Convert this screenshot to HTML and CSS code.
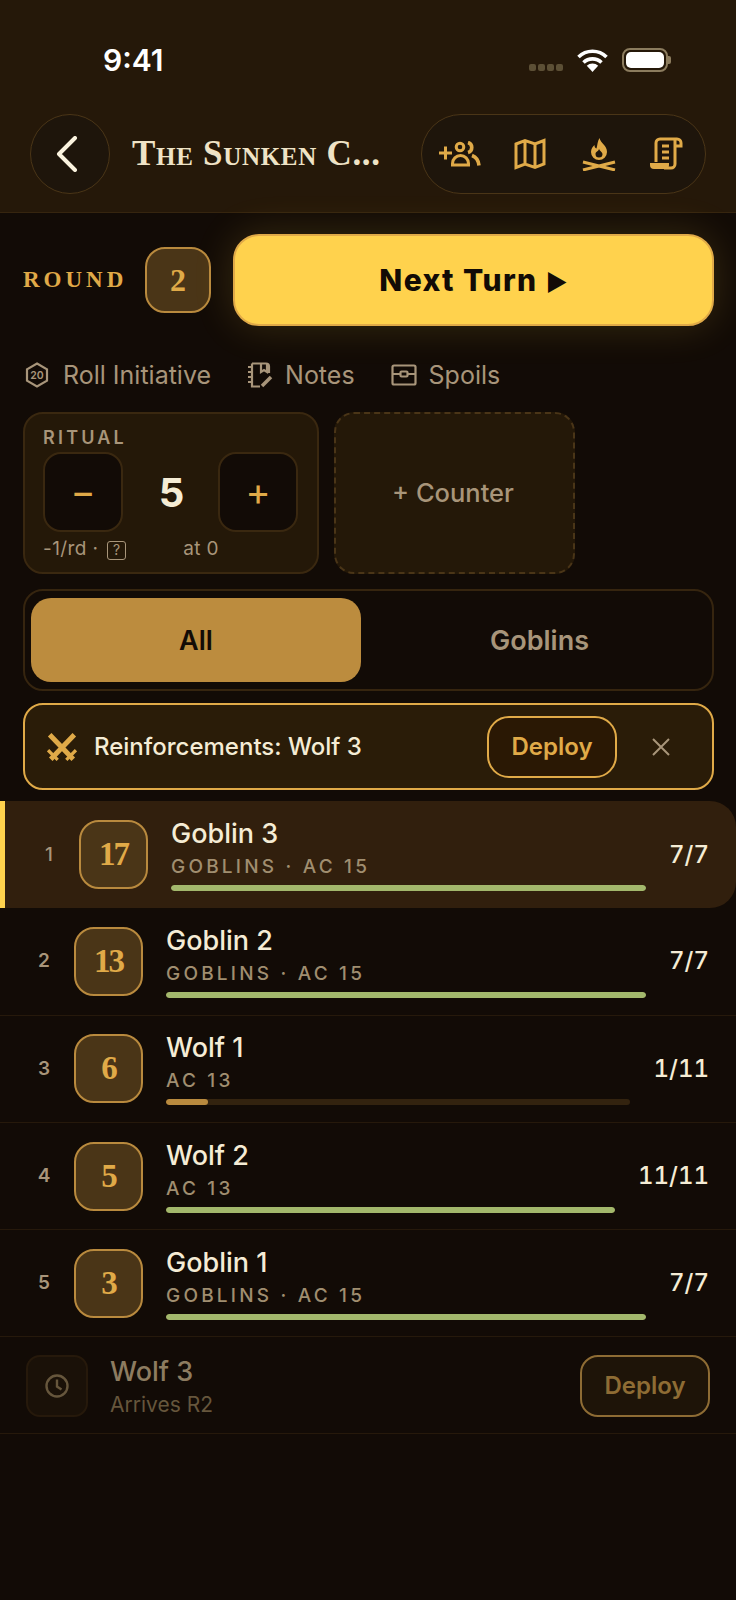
FILE: index.html
```html
<!DOCTYPE html>
<html lang="en">
<head>
  <meta charset="utf-8" />
  <title>The Sunken Crypt</title>
  <link rel="stylesheet" href="styles.css">
</head>
<body>
  <header class="top">
    <div class="status">
      <span class="clock">9:41</span>
      <div class="status-icons">
        <span class="dots"><i></i><i></i><i></i><i></i></span>
        <svg class="wifi" width="33" height="24" viewBox="0 0 32 24"><path d="M2 9a20 20 0 0 1 28 0M7 14.500a13 13 0 0 1 18 0M11.500 19a6.500 6.500 0 0 1 9 0" fill="none" stroke="#fff" stroke-width="3.600"/><path d="M16 24l-4-4.500a6 6 0 0 1 8 0z" fill="#fff"/></svg>
        <span class="battery"><b></b></span>
      </div>
    </div>
    <nav class="nav">
      <a class="back"><svg width="22" height="36" viewBox="0 0 22 36"><path d="M19 2L3 18l16 16" fill="none" stroke="#fbf3df" stroke-width="4" stroke-linecap="round" stroke-linejoin="round"/></svg></a>
      <h1 class="title">The Sunken C...</h1>
      <div class="tools">
        <svg width="42" height="26" viewBox="0 0 42 26" fill="none" stroke="#e0aa48" stroke-width="3"><path d="M0 12h13M6.500 5.500v13"/><circle cx="21" cy="6" r="3.800"/><path d="M13.500 24v-1.500a8 8 0 0 1 16 0V24z"/><path d="M29 1.500a5.200 5.200 0 0 1 0 10M33 14.500c4 1.500 6.500 5 7 10" stroke-width="3.600"/></svg>
        <svg class="map" width="32" height="32" viewBox="0 0 32 32" fill="none" stroke="#e0aa48" stroke-width="3"><path d="M2 6l9-3.500 10 3.500 9-3.500V26l-9 3.500L11 26l-9 3.500zM11 2.500V26M21 6v23.500"/></svg>
        <svg width="34" height="34" viewBox="0 0 34 34"><path fill="#e0aa48" fill-rule="evenodd" d="M17.500 1c1 5 7.500 7.500 7.500 14a8 8 0 0 1-16 0c0-3.500 2-5.500 3.500-7 0 2 .5 3 2 3.500C15.500 8 15.500 4 17.500 1zM17 12c.5 2 3.500 3 3.500 5a3.500 3.500 0 0 1-7 0c0-2.500 3-2.500 3.500-5z"/><path d="M1 25l32 8M33 25L1 33" stroke="#e0aa48" stroke-width="3"/></svg>
        <svg width="34" height="34" viewBox="0 0 34 34" fill="none" stroke="#e0aa48" stroke-width="3"><path d="M7 25V6a4 4 0 0 1 4-4h17a4 4 0 0 1 4 4v3h-6M26 3v24a4 4 0 0 1-4 4H15M13 9h7M13 15h7M13 21h7"/><path d="M1 26h19v2a4 4 0 0 1-4 4H5a4 4 0 0 1-4-4z" fill="#e0aa48" stroke="none"/></svg>
      </div>
    </nav>
  </header>

  <main>
    <section class="controls">
      <div class="round-row">
        <span class="round-label">ROUND</span>
        <span class="round-badge">2</span>
        <a class="next-turn">Next Turn <span class="arrow">▶</span></a>
      </div>

      <div class="actions">
        <a class="action">
          <svg width="26" height="26" viewBox="0 0 26 26"><path d="M12 1.500l10 5.800v11.400l-10 5.800-10-5.800V7.300z" fill="none" stroke="#a8957a" stroke-width="2.200"/><text x="12" y="17" text-anchor="middle" class="d20">20</text></svg>
          Roll Initiative
        </a>
        <a class="action">
          <svg width="26" height="26" viewBox="0 0 26 26" fill="none" stroke="#a8957a" stroke-width="2.200"><path d="M5 1.500h14a3 3 0 0 1 3 3V11M5 1.500V24.500h8M14 2v8l3-2 3 2V2"/><path d="M1 5h5M1 10h5M1 15h5M1 20h5" stroke-dasharray="3 2"/><path d="M15 24l9-9" stroke-width="3.600"/></svg>
          Notes
        </a>
        <a class="action">
          <svg width="26" height="22" viewBox="0 0 26 22" fill="none" stroke="#a8957a" stroke-width="2.200"><rect x="1.500" y="1.500" width="23" height="19" rx="1.500"/><path d="M1.500 10h8M16.500 10h8"/><rect x="9.500" y="7.500" width="7" height="5" rx="1"/></svg>
          Spoils
        </a>
      </div>

      <div class="counters">
        <div class="counter">
          <div class="counter-name">RITUAL</div>
          <div class="stepper">
            <a class="step">−</a>
            <span class="counter-value">5</span>
            <a class="step">+</a>
          </div>
          <div class="counter-foot">
            <span>-1/rd · <i class="help">?</i></span>
            <span>at 0</span>
          </div>
        </div>
        <a class="counter-add">+ Counter</a>
      </div>

      <div class="filter">
        <a class="filter-tab active">All</a>
        <a class="filter-tab">Goblins</a>
      </div>

      <div class="banner">
        <svg width="30" height="28" viewBox="0 0 28 26" fill="none" stroke="#e0aa48"><path d="M2.500 1.500l22 23M25.500 1.500l-22 23" stroke-width="4.600"/><path d="M1 16l9 9M27 16l-9 9" stroke-width="3"/></svg>
        <span class="banner-text">Reinforcements: Wolf 3</span>
        <a class="deploy">Deploy</a>
        <svg class="dismiss" width="18" height="18" viewBox="0 0 18 18"><path d="M1 1l16 16M17 1L1 17" stroke="#a8957a" stroke-width="2"/></svg>
      </div>
    </section>

    <ul class="list">
      <li class="row current">
        <span class="pos">1</span>
        <span class="init">17</span>
        <div class="info">
          <div class="name">Goblin 3</div>
          <div class="meta">GOBLINS · AC 15</div>
          <div class="bar"><div class="fill" style="width:100%"></div></div>
        </div>
        <span class="hp">7/7</span>
      </li>
      <li class="row">
        <span class="pos">2</span>
        <span class="init">13</span>
        <div class="info">
          <div class="name">Goblin 2</div>
          <div class="meta">GOBLINS · AC 15</div>
          <div class="bar"><div class="fill" style="width:100%"></div></div>
        </div>
        <span class="hp">7/7</span>
      </li>
      <li class="row">
        <span class="pos">3</span>
        <span class="init">6</span>
        <div class="info">
          <div class="name">Wolf 1</div>
          <div class="meta">AC 13</div>
          <div class="bar"><div class="fill low" style="width:9%"></div></div>
        </div>
        <span class="hp">1/11</span>
      </li>
      <li class="row">
        <span class="pos">4</span>
        <span class="init">5</span>
        <div class="info">
          <div class="name">Wolf 2</div>
          <div class="meta">AC 13</div>
          <div class="bar"><div class="fill" style="width:100%"></div></div>
        </div>
        <span class="hp">11/11</span>
      </li>
      <li class="row">
        <span class="pos">5</span>
        <span class="init">3</span>
        <div class="info">
          <div class="name">Goblin 1</div>
          <div class="meta">GOBLINS · AC 15</div>
          <div class="bar"><div class="fill" style="width:100%"></div></div>
        </div>
        <span class="hp">7/7</span>
      </li>
      <li class="pending">
        <span class="wait"><svg width="26" height="26" viewBox="0 0 26 26" fill="none" stroke="#66563c" stroke-width="2.400"><circle cx="13" cy="13" r="10.500"/><path d="M13 6.500V13.500l4.500 3"/></svg></span>
        <div class="pending-info">
          <div class="pending-name">Wolf 3</div>
          <div class="pending-meta">Arrives R2</div>
        </div>
        <a class="deploy late">Deploy</a>
      </li>
    </ul>
  </main>
</body>
</html>
```

FILE: styles.css
```css
* {
  box-sizing: border-box;
}

body {
  margin: 0;
  background: #120b06;
  color: #f5ecd5;
  font: normal 24px/30px Inter, "Liberation Sans", sans-serif;
}

a {
  display: block;
}

.top {
  height: 213px;
  padding: 0 30px;
  background: #251809;
  border-bottom: 1px solid #36250f;
}

.status {
  height: 114px;
  padding: 44px 38px 0 73px;
  display: flex;
  justify-content: space-between;
  align-items: flex-start;
}

.clock {
  color: #fff;
  font: 600 30px/32px Inter, sans-serif;
}

.status-icons {
  display: flex;
  align-items: center;
  gap: 13px;
  height: 32px;
}

.dots {
  display: flex;
  gap: 2px;
  margin-top: 14px;
}

.dots i {
  width: 7px;
  height: 7px;
  border-radius: 2px;
  background: #5c4f35;
}

.battery {
  position: relative;
  width: 46px;
  height: 24px;
  padding: 2px;
  border: 2px solid #8c7c5e;
  border-radius: 8px;
}

.battery b {
  display: block;
  height: 100%;
  background: #fff;
  border-radius: 5px;
}

.battery::after {
  content: "";
  position: absolute;
  right: -5px;
  top: 6px;
  width: 3px;
  height: 8px;
  background: #8c7c5e;
  border-radius: 0 2px 2px 0;
}

.nav {
  display: flex;
  align-items: center;
}

.back {
  width: 80px;
  height: 80px;
  border: 1px solid #4a3517;
  border-radius: 50%;
  background: #1e150b;
  display: flex;
  align-items: center;
  justify-content: center;
  padding-right: 6px;
}

.title {
  flex: 1;
  margin: 0 0 0 22px;
  color: #efe3c6;
  font: bold 35px/40px "Liberation Serif", serif;
  font-variant: small-caps;
  letter-spacing: 0.7px;
  white-space: nowrap;
}

.tools {
  width: 285px;
  height: 80px;
  padding: 0 22px 0 17px;
  border: 1px solid #4a3517;
  border-radius: 40px;
  background: #1e150b;
  display: flex;
  align-items: center;
  justify-content: space-between;
}

.map {
  margin-right: 4px;
}

.controls {
  padding: 21px 22px 11px 23px;
}

.round-row {
  display: flex;
  align-items: center;
}

.round-label {
  width: 122px;
  color: #e0aa48;
  font: bold 23px/30px "Liberation Serif", serif;
  letter-spacing: 4px;
}

.round-badge {
  width: 66px;
  height: 66px;
  border: 2px solid #b98a3e;
  border-radius: 20px;
  background: #4a3517;
  color: #e0aa48;
  font: bold 32px/62px "Liberation Serif", serif;
  text-align: center;
}

.next-turn {
  flex: 1;
  height: 92px;
  margin-left: 22px;
  border: 2px solid #e0aa48;
  border-radius: 26px;
  background: #ffd24d;
  box-shadow: 0 0 40px rgba(255, 210, 77, 0.16);
  color: #120b06;
  font: 800 30px/88px Inter, sans-serif;
  letter-spacing: 1.400px;
  text-align: center;
}

.arrow {
  font-size: 23px;
  letter-spacing: 0;
}

.actions {
  display: flex;
  gap: 36px;
  margin: 36px 0 0 2px;
  height: 26px;
}

.action {
  display: flex;
  align-items: center;
  gap: 12px;
  color: #a8957a;
  font-size: 25px;
  line-height: 26px;
}

.d20 {
  fill: #a8957a;
  font: 600 10.500px Inter, sans-serif;
}

.counters {
  display: flex;
  gap: 15px;
  margin-top: 24px;
}

.counter {
  width: 296px;
  height: 162px;
  padding: 14px 19px 0 18px;
  border: 2px solid #3a2810;
  border-radius: 20px;
  background: #241808;
}

.counter-name {
  color: #a8957a;
  font: 600 18px/20px Inter, sans-serif;
  letter-spacing: 3.200px;
}

.stepper {
  display: flex;
  justify-content: space-between;
  align-items: center;
  margin-top: 4px;
}

.step {
  width: 80px;
  height: 80px;
  border: 2px solid #3a2810;
  border-radius: 18px;
  background: #120b06;
  color: #e0aa48;
  font: 38px/75px Inter, sans-serif;
  text-align: center;
}

.counter-value {
  font: bold 40px/48px Inter, sans-serif;
  margin: 2px 0 0 2px;
}

.counter-foot {
  display: flex;
  justify-content: space-between;
  width: 176px;
  margin-top: 5px;
  color: #a8957a;
  font-size: 19px;
  line-height: 24px;
  letter-spacing: 0.400px;
}

.help {
  display: inline-block;
  width: 19px;
  height: 19px;
  margin-left: 3px;
  border: 1.500px solid #a8957a;
  border-radius: 3px;
  font: normal 14px/16px Inter, sans-serif;
  text-align: center;
}

.counter-add {
  width: 241px;
  height: 162px;
  padding-right: 3px;
  border: 2px dashed #4a3517;
  border-radius: 20px;
  background: #241808;
  color: #a8957a;
  font: 500 25.500px/158px Inter, sans-serif;
  text-align: center;
}

.filter {
  display: flex;
  height: 102px;
  margin-top: 15px;
  padding: 7px 6px;
  border: 2px solid #36250f;
  border-radius: 20px;
}

.filter-tab {
  flex: 1;
  padding-left: 12px;
  border-radius: 20px;
  color: #a8957a;
  font: 600 27px/86px Inter, sans-serif;
  text-align: center;
}

.filter-tab.active {
  flex: 0 0 330px;
  padding-left: 0;
  background: #bc8c3e;
  color: #120b06;
}

.banner {
  display: flex;
  align-items: center;
  height: 87px;
  margin-top: 12px;
  padding: 0 42px 0 22px;
  border: 2px solid #e0aa48;
  border-radius: 20px;
  background: #2a1c08;
}

.banner-text {
  flex: 1;
  margin-left: 17px;
  font-weight: 500;
}

.deploy {
  width: 130px;
  height: 62px;
  border: 2px solid #e0aa48;
  border-radius: 22px;
  background: #2a1804;
  color: #e0aa48;
  font: 600 24px/58px Inter, sans-serif;
  text-align: center;
}

.dismiss {
  margin-left: 35px;
}

.list {
  list-style: none;
  margin: 0;
  padding: 0;
}

.row {
  display: flex;
  align-items: center;
  height: 107.300px;
  padding: 0 27px 0 28px;
  border-bottom: 1px solid #26190b;
}

.row.current {
  border-left: 5px solid #ffd24d;
  border-bottom: 0;
  border-radius: 0 26px 26px 0;
  background: #311f0d;
}

.pos {
  width: 32px;
  color: #a8957a;
  font: 600 19px/24px Inter, sans-serif;
  text-align: center;
}

.row.current .pos {
  font-weight: 500;
}

.init {
  width: 69px;
  height: 69px;
  margin: 0 23px 0 14px;
  border: 2px solid #b98a3e;
  border-radius: 20px;
  background: #4a3517;
  color: #e0aa48;
  font: bold 33px/64px "Liberation Serif", serif;
  letter-spacing: -2px;
  text-align: center;
}

.info {
  flex: 1;
}

.name {
  font: 500 27px/32px Inter, sans-serif;
}

.meta {
  margin-top: 5px;
  color: #a08e70;
  font: 500 19px/24px Inter, sans-serif;
  letter-spacing: 3.200px;
}

.bar {
  height: 6px;
  margin-top: 6px;
  border-radius: 3px;
  background: #33230f;
  overflow: hidden;
}

.fill {
  height: 100%;
  border-radius: 3px;
  background: #a3b86c;
}

.fill.low {
  background: #b98a3e;
}

.hp {
  margin-left: 23px;
  font: 500 24px/32px Inter, sans-serif;
  font-variant-numeric: tabular-nums;
}

.pending {
  display: flex;
  align-items: center;
  height: 97px;
  padding: 2px 26px 0;
  border-bottom: 1px solid #26190b;
}

.wait {
  width: 62px;
  height: 62px;
  border: 2px solid #26190b;
  border-radius: 14px;
  background: #1a1108;
  display: flex;
  align-items: center;
  justify-content: center;
}

.pending-info {
  flex: 1;
  margin-left: 22px;
}

.pending-name {
  color: #8d7c60;
  font: 500 27px/34px Inter, sans-serif;
}

.pending-meta {
  margin-top: 4px;
  color: #66563c;
  font-size: 21px;
  line-height: 24px;
}

.deploy.late {
  border-color: #8e6c34;
  background: #1e1408;
  color: #8e6c34;
  border-radius: 18px;
}
```
